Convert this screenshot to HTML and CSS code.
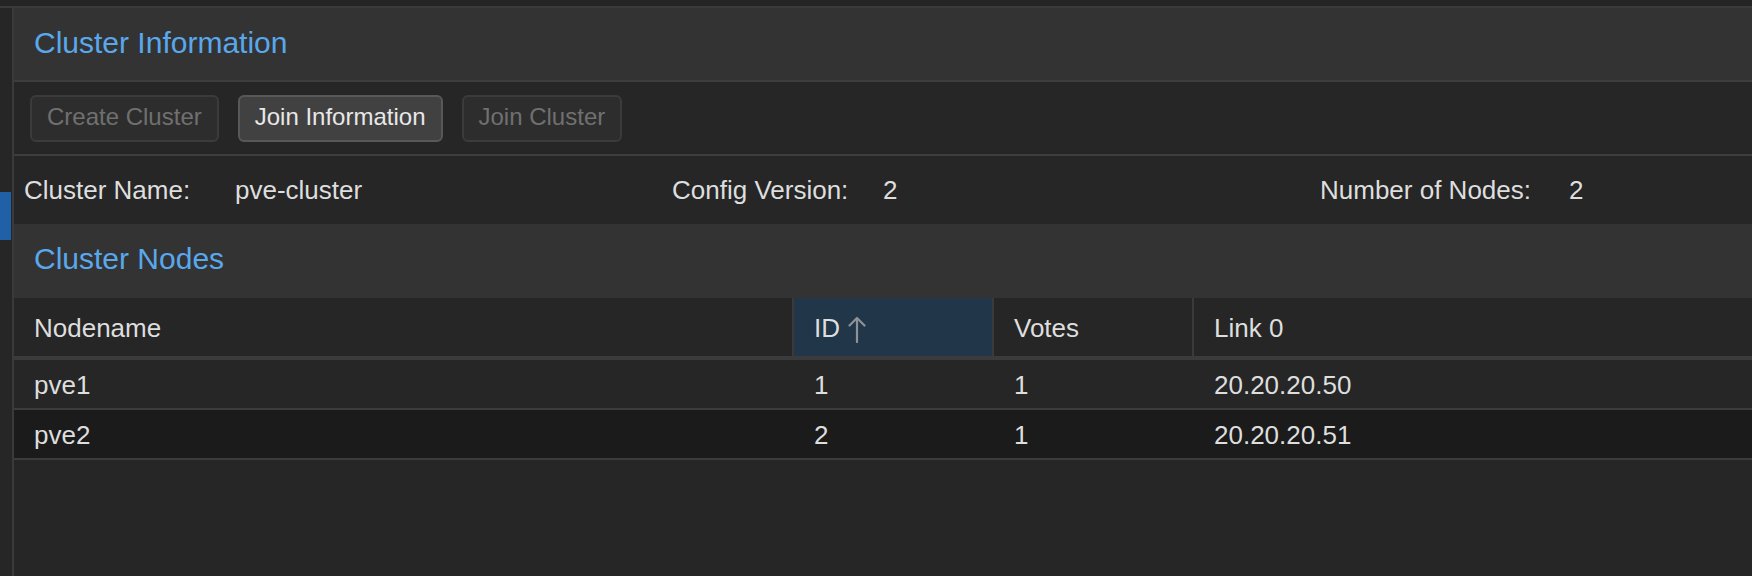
FILE: index.html
```html
<!DOCTYPE html>
<html lang="en">
<head>
<meta charset="utf-8">
<title>Cluster</title>
<link rel="stylesheet" href="styles.css">
</head>
<body>
<div class="topbar"></div>
<div class="layout">
  <aside class="nav">
    <div class="nav-selected"></div>
  </aside>
  <main class="content">
    <header class="panel-header"><span class="panel-title">Cluster Information</span></header>
    <div class="toolbar">
      <button class="btn btn-disabled">Create Cluster</button>
      <button class="btn btn-active">Join Information</button>
      <button class="btn btn-disabled">Join Cluster</button>
    </div>
    <div class="info-row">
      <div class="info-item"><span class="info-label">Cluster Name:</span><span class="info-value">pve-cluster</span></div>
      <div class="info-item"><span class="info-label">Config Version:</span><span class="info-value">2</span></div>
      <div class="info-item"><span class="info-label info-label-wide">Number of Nodes:</span><span class="info-value">2</span></div>
    </div>
    <header class="panel-header panel-header-nodes"><span class="panel-title">Cluster Nodes</span></header>
    <div class="grid">
      <div class="grid-head">
        <div class="cell hcell">Nodename</div>
        <div class="cell hcell sep sorted">ID
          <svg class="sort-arrow" width="20" height="28" viewBox="0 0 20 28"><path d="M10 27V3M2.5 10.5L10 3l7.5 7.5" fill="none" stroke="#8d9296" stroke-width="2.2" stroke-linecap="round" stroke-linejoin="round"/></svg>
        </div>
        <div class="cell hcell sep">Votes</div>
        <div class="cell hcell sep">Link 0</div>
      </div>
      <div class="grid-row">
        <div class="cell">pve1</div>
        <div class="cell pad">1</div>
        <div class="cell pad">1</div>
        <div class="cell pad">20.20.20.50</div>
      </div>
      <div class="grid-row grid-row-dark">
        <div class="cell">pve2</div>
        <div class="cell pad">2</div>
        <div class="cell pad">1</div>
        <div class="cell pad">20.20.20.51</div>
      </div>
    </div>
  </main>
</div>
</body>
</html>
```
FILE: styles.css
```css
* { box-sizing: border-box; }
html, body {
  margin: 0;
  padding: 0;
  width: 1752px;
  height: 576px;
  overflow: hidden;
  background: #262626;
  font-family: "Liberation Sans", Arial, Helvetica, sans-serif;
  color: #dedede;
}
.topbar {
  height: 8px;
  background: #242424;
  border-bottom: 2px solid #3a3a3a;
}
.layout {
  display: flex;
  height: 568px;
}
.nav {
  width: 14px;
  flex: none;
  background: #262626;
  border-right: 2px solid #3a3a3a;
  padding-top: 184px;
}
.nav-selected {
  width: 11px;
  height: 48px;
  background: #2060a6;
}
.content {
  flex: 1;
  display: flex;
  flex-direction: column;
  min-width: 0;
  background: #262626;
}
.panel-header {
  height: 72px;
  flex: none;
  background: #333333;
  padding: 18px 0 0 20px;
}
.panel-header-nodes {
  height: 74px;
}
.panel-title {
  font-size: 30px;
  line-height: 34px;
  color: #5aa8ec;
}
.toolbar {
  height: 76px;
  flex: none;
  border-top: 2px solid #3d3d3d;
  border-bottom: 2px solid #3d3d3d;
  background: #262626;
  display: flex;
  align-items: center;
  gap: 19px;
  padding: 0 0 0 16px;
}
.btn {
  font-family: inherit;
  font-size: 24px;
  line-height: 27px;
  height: 47px;
  padding: 0 15px 3px;
  border-radius: 6px;
  border: 2px solid #3b3b3b;
  background: #2d2d2d;
  color: #707070;
}
.btn-active {
  background: #414141;
  border-color: #585858;
  color: #e8e8e8;
}
.info-row {
  height: 68px;
  flex: none;
  display: grid;
  grid-template-columns: 648px 648px 1fr;
  align-items: center;
  padding: 0 0 0 10px;
  font-size: 26px;
  line-height: 30px;
}
.info-item {
  display: flex;
}
.info-label {
  width: 211px;
  flex: none;
}
.info-label-wide {
  width: 249px;
}
.grid {
  font-size: 26px;
  line-height: 30px;
}
.grid-head,
.grid-row {
  display: grid;
  grid-template-columns: 778px 200px 200px 1fr;
}
.grid-head {
  height: 62px;
  border-bottom: 4px solid #3b3b3b;
}
.grid-row {
  height: 50px;
  border-bottom: 2px solid #3b3b3b;
  background: #262626;
}
.grid-row-dark {
  background: #1b1b1b;
}
.cell {
  display: flex;
  align-items: center;
  padding-left: 20px;
  padding-top: 2px;
  white-space: nowrap;
}
.pad {
  padding-left: 22px;
}
.sep {
  border-left: 2px solid #3a3a3a;
}
.sorted {
  background: #213649;
}
.sort-arrow {
  margin-left: 7px;
  margin-top: 2px;
}
```
